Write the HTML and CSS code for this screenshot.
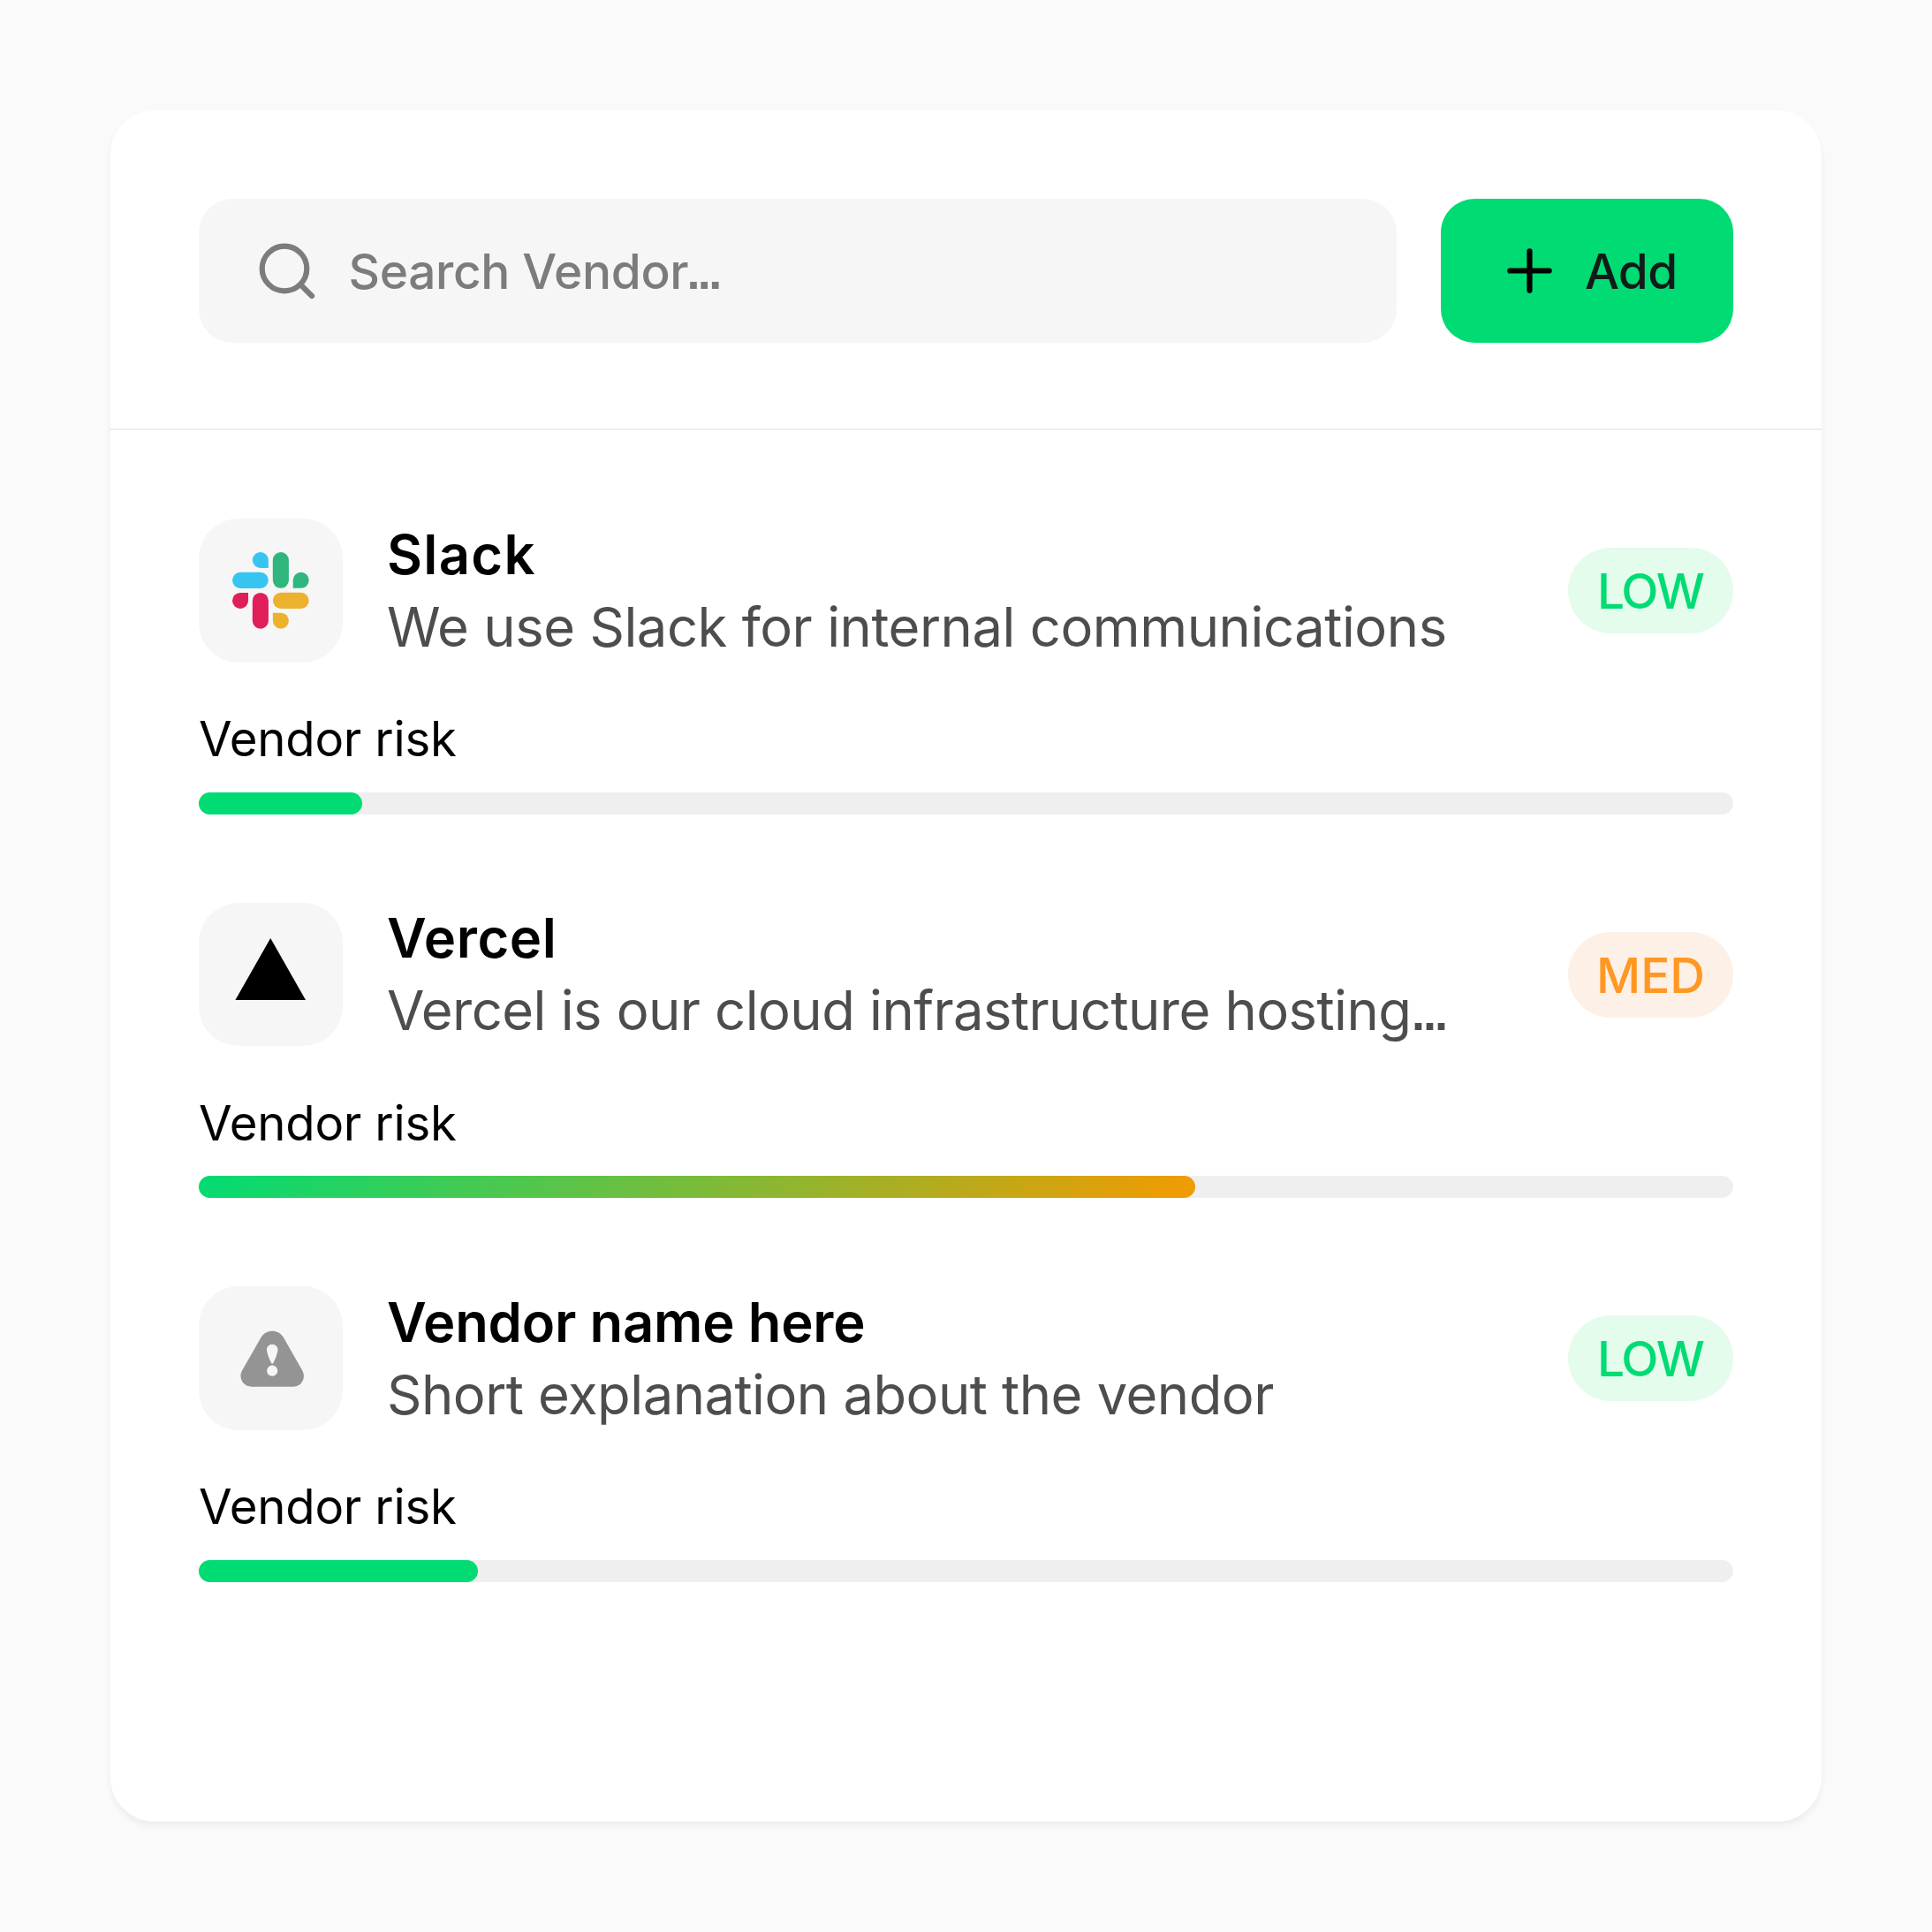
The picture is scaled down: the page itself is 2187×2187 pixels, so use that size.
FILE: index.html
```html
<!DOCTYPE html>
<html lang="en">
<head>
<meta charset="utf-8">
<title>Vendors</title>
<link rel="stylesheet" href="styles.css">
</head>
<body>
<main class="card">
  <header class="toolbar">
    <div class="search">
      <svg class="search-icon" width="64" height="64" viewBox="0 0 64 64" fill="none" stroke="currentColor" stroke-width="6.2" stroke-linecap="round"><circle cx="29" cy="29" r="25.3"/><path d="M47.5 47.5 60 60"/></svg>
      <span class="search-text">Search Vendor<span class="dots dots-search">...</span></span>
    </div>
    <button class="add" type="button">
      <svg class="plus-icon" width="51" height="51" viewBox="0 0 51 51" fill="none" stroke="#000" stroke-width="6.2" stroke-linecap="round"><path d="M25.5 3.3v44.4M3.3 25.5h44.4"/></svg>
      <span class="add-text">Add</span>
    </button>
  </header>

  <section class="list">
    <article class="vendor">
      <div class="summary">
        <div class="tile">
          <svg width="162" height="162" viewBox="0 0 162 162">
            <defs>
              <g id="arm"><path d="M31.8 0a9 9 0 0 1 9 9v9h-9a9 9 0 0 1 0-18z"/><rect y="22.8" width="40.8" height="18.1" rx="9.05"/></g>
            </defs>
            <g transform="translate(38 38)">
              <use href="#arm" fill="#36c5f0"/>
              <use href="#arm" fill="#2eb67d" transform="rotate(90 43.35 43.35)"/>
              <use href="#arm" fill="#ecb22e" transform="rotate(180 43.35 43.35)"/>
              <use href="#arm" fill="#e01e5a" transform="rotate(270 43.35 43.35)"/>
            </g>
          </svg>
        </div>
        <div class="info">
          <h2 class="name name-slack">Slack</h2>
          <p class="about about-slack">We use Slack for internal communications</p>
        </div>
        <span class="pill low">LOW</span>
      </div>
      <p class="label">Vendor risk</p>
      <div class="track"><div class="fill" style="width:184.5px"></div></div>
    </article>

    <article class="vendor">
      <div class="summary">
        <div class="tile">
          <svg width="162" height="162" viewBox="0 0 162 162"><path d="M81.2 39.9 121 110H41.4z"/></svg>
        </div>
        <div class="info">
          <h2 class="name name-vercel">Vercel</h2>
          <p class="about about-vercel">Vercel is our cloud infrastructure hosting<span class="dots">...</span></p>
        </div>
        <span class="pill med">MED</span>
      </div>
      <p class="label">Vendor risk</p>
      <div class="track"><div class="fill rising" style="width:1128px"></div></div>
    </article>

    <article class="vendor">
      <div class="summary">
        <div class="tile">
          <svg width="162" height="162" viewBox="0 0 162 162">
            <g transform="translate(0 .5)">
              <path fill="#949494" d="M83.2 50.2c5.2 0 9.8 2.4 12.6 7.1L117 94.5c5 8.5-.5 18.7-10.5 18.7H60c-10 0-15.7-10.2-10.7-18.7L70.6 57.3c2.8-4.7 7.4-7.1 12.6-7.1z"/>
              <path fill="#f6f6f6" d="M83.2 65.2c3.8 0 6.8 3.2 6.2 7-.7 4.5-3 10.500-5.200 14.300-.5.900-1.500.9-2 0-2.200-3.800-4.500-9.800-5.200-14.300-.6-3.800 2.400-7 6.200-7z"/>
              <circle fill="#f6f6f6" cx="83.2" cy="95.2" r="6.1"/>
            </g>
          </svg>
        </div>
        <div class="info">
          <h2 class="name">Vendor name here</h2>
          <p class="about about-short">Short explanation about the vendor</p>
        </div>
        <span class="pill low">LOW</span>
      </div>
      <p class="label">Vendor risk</p>
      <div class="track"><div class="fill" style="width:316px"></div></div>
    </article>
  </section>
</main>
</body>
</html>
```
FILE: styles.css
```css
* { box-sizing: border-box; margin: 0; }

body {
  padding: 125px;
  background: #fafafa;
  font-family: Inter, "Liberation Sans", sans-serif;
  color: #000;
}

.card {
  height: 1937px;
  border-radius: 50px;
  background: #fff;
  box-shadow: 0 5px 7px rgba(0, 0, 0, .055);
}

.toolbar {
  display: flex;
  gap: 50px;
  height: 362px;
  padding: 100px;
  padding-bottom: 0;
  border-bottom: 2px solid #eee;
}

.search {
  display: flex;
  flex: 1;
  align-items: center;
  gap: 37.5px;
  height: 163px;
  padding-left: 68px;
  border-radius: 38px;
  background: #f6f6f6;
  color: #7c7c7c;
}

.search-text {
  padding-top: 1px;
  font-size: 55px;
  font-weight: 500;
  letter-spacing: -.35px;
}

/* tight, square ellipsis */
.dots {
  font-family: "Liberation Sans", Arial, sans-serif;
  font-size: 54px;
  font-weight: 700;
  line-height: 1;
  letter-spacing: -2px;
  margin-left: .5px;
}

.dots-search {
  letter-spacing: -2.6px;
  margin-left: -1.8px;
}

.add {
  display: flex;
  align-items: center;
  gap: 37px;
  width: 331px;
  height: 163px;
  padding: 0 0 0 75px;
  border: 0;
  border-radius: 38px;
  background: #00dc73;
  color: #111b19;
  font: inherit;
}

.add-text {
  font-size: 55px;
  font-weight: 500;
  letter-spacing: -.7px;
}

.list {
  display: flex;
  flex-direction: column;
  gap: 100px;
  padding: 100.4px 100px 0;
}

.vendor { height: 334.5px; }

.summary {
  display: flex;
  align-items: center;
  height: 162.5px;
}

.tile {
  width: 162.5px;
  height: 162.5px;
  border-radius: 45px;
  background: #f6f6f6;
}

.info {
  flex: 1;
  padding-left: 50.5px;
  white-space: nowrap;
}

.name, .about {
  font-size: 61.5px;
  line-height: 81.7px;
}

.name {
  font-weight: 600;
  letter-spacing: -.2px;
}

.name-slack { letter-spacing: 1.3px; }
.name-vercel { letter-spacing: .6px; }

.about {
  color: #4d4d4d;
  font-weight: 400;
}

.about-slack { letter-spacing: -.46px; }
.about-vercel { letter-spacing: -.55px; }
.about-short { letter-spacing: -.52px; }

.pill {
  width: 187px;
  height: 97px;
  border-radius: 49px;
  font-size: 55px;
  font-weight: 500;
  line-height: 98px;
  text-align: center;
}

.low {
  padding-right: 1.5px;
  background: #e4fcec;
  color: #00dc73;
  letter-spacing: -2.3px;
}

.med {
  background: #fdf0e6;
  color: #ff9823;
}

.label {
  margin-top: 49.6px;
  font-size: 54.5px;
  line-height: 75px;
  letter-spacing: -.2px;
}

.track {
  height: 25px;
  margin-top: 22.2px;
  border-radius: 13px;
  background: #efefef;
}

.fill {
  height: 25px;
  border-radius: 13px;
  background: #00dc73;
}

.rising { background: linear-gradient(135deg, #00dc73, #f59a00); }
```
